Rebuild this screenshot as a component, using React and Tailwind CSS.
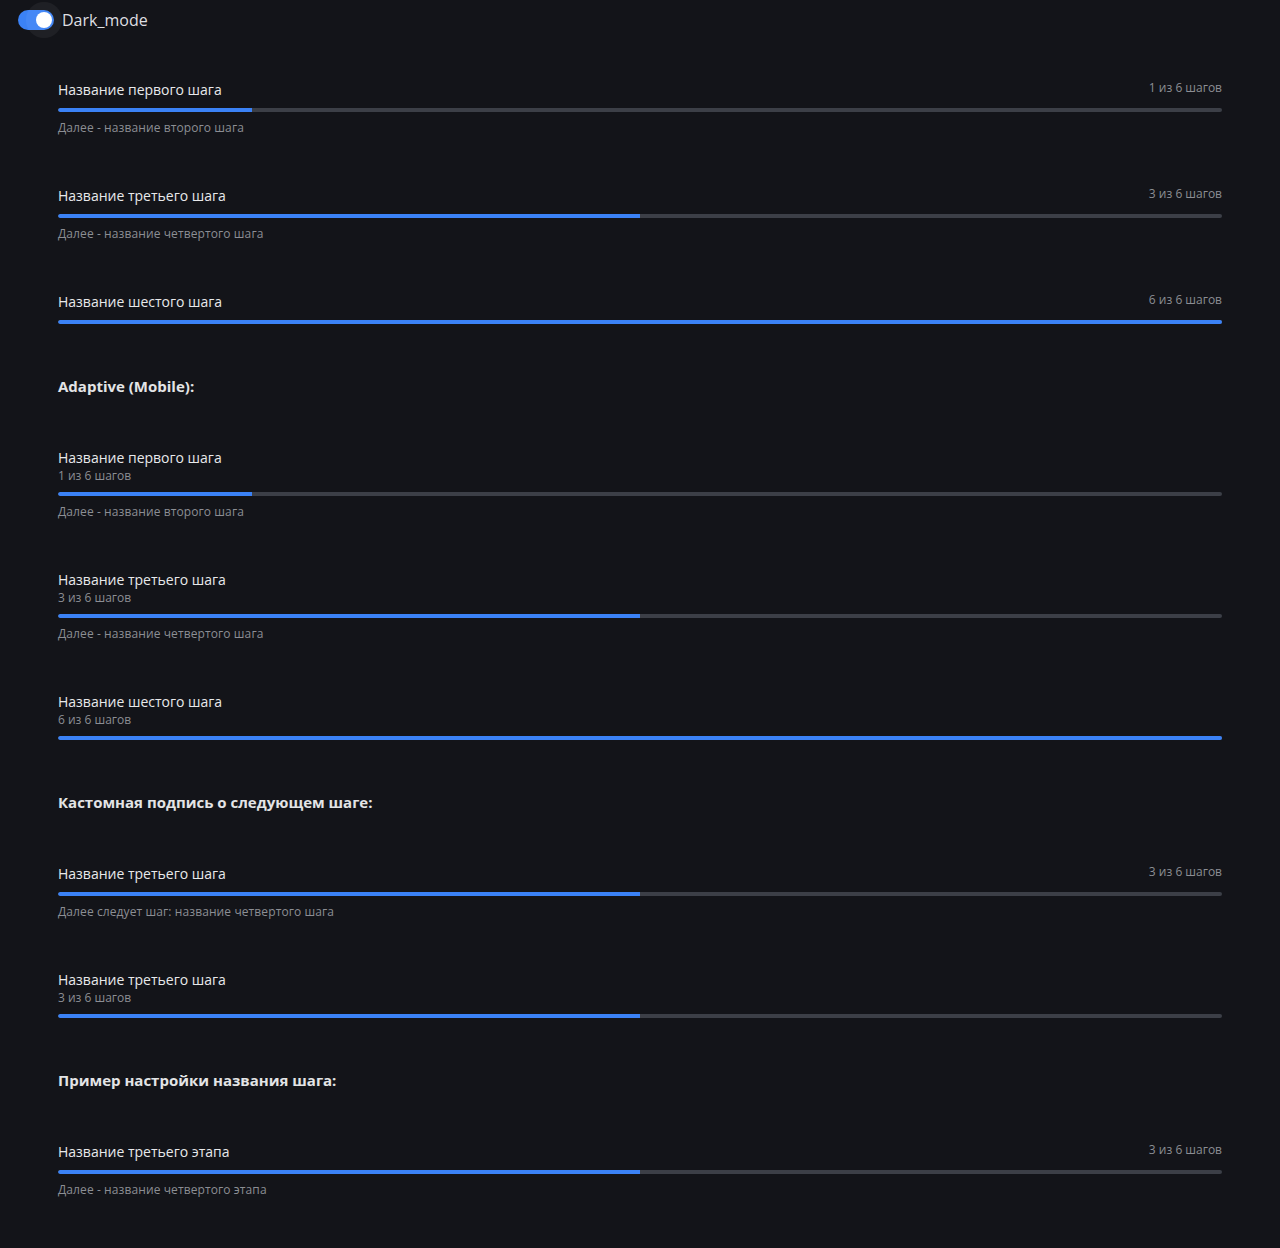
function ProgressBar({ step, total }) {
  const pct = (step / total) * 100;
  return (
    <div className="mt-2 h-1 w-full rounded-full bg-[#3c3f47] overflow-hidden">
      <div className="h-full bg-[#3b82f6] rounded-l-full" style={{ width: `${pct}%` }} />
    </div>
  );
}

function StepProgress({ title, step, total = 6, next, mobile = false }) {
  const counter = `${step} из ${total} шагов`;
  return (
    <div>
      {mobile ? (
        <div>
          <div className="text-sm leading-5 text-[#e8e9eb]">{title}</div>
          <div className="text-xs leading-4 text-[#8c8e94]">{counter}</div>
        </div>
      ) : (
        <div className="flex items-start justify-between">
          <div className="text-sm leading-5 text-[#e8e9eb]">{title}</div>
          <div className="text-xs leading-4 text-[#8c8e94]">{counter}</div>
        </div>
      )}
      <ProgressBar step={step} total={total} />
      {next && <div className="mt-2 text-xs leading-4 tracking-[0.1px] text-[#8c8e94]">{next}</div>}
    </div>
  );
}

function Heading({ children }) {
  return <div className="text-[15px] leading-6 font-bold text-[#e3e4e6]">{children}</div>;
}

export default function App() {
  return (
    <div className="min-h-[1248px] bg-[#131419] font-['Open_Sans',sans-serif]">
      <div className="flex h-10 items-center pl-[18px]">
        <div className="relative h-5 w-9 rounded-full bg-[#3b82f6]">
          <div className="absolute left-[8px] top-[-8px] h-9 w-9 rounded-full bg-white/5" />
          <div className="absolute right-[2px] top-[2px] h-4 w-4 rounded-full bg-white" />
        </div>
        <span className="ml-2 text-base text-[#dedfe2]">Dark_mode</span>
      </div>

      <div className="flex flex-col gap-[50px] px-[58px] pt-10 pb-[50px]">
        <StepProgress title="Название первого шага" step={1} next="Далее - название второго шага" />
        <StepProgress title="Название третьего шага" step={3} next="Далее - название четвертого шага" />
        <StepProgress title="Название шестого шага" step={6} />

        <Heading>Adaptive (Mobile):</Heading>

        <StepProgress mobile title="Название первого шага" step={1} next="Далее - название второго шага" />
        <StepProgress mobile title="Название третьего шага" step={3} next="Далее - название четвертого шага" />
        <StepProgress mobile title="Название шестого шага" step={6} />

        <Heading>Кастомная подпись о следующем шаге:</Heading>

        <StepProgress title="Название третьего шага" step={3} next="Далее следует шаг: название четвертого шага" />
        <StepProgress mobile title="Название третьего шага" step={3} />

        <Heading>Пример настройки названия шага:</Heading>

        <StepProgress title="Название третьего этапа" step={3} next="Далее - название четвертого этапа" />
      </div>
    </div>
  );
}
